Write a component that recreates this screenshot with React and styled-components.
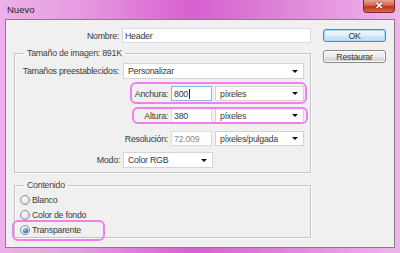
import styled, { createGlobalStyle } from "styled-components";

const Global = createGlobalStyle`
  html, body { margin: 0; padding: 0; background: #e9a2e3; }
  body { font-family: "Liberation Sans", Arial, sans-serif; }
`;

const Window = styled.div`
  width: 400px;
  height: 253px;
  box-sizing: border-box;
  padding: 0 5px 5px 5px;
  display: flex;
  flex-direction: column;
  background: linear-gradient(90deg, #eeb0ea 0%, #e89ee2 18%, #d760cf 48%, #df86d8 72%, #efb6eb 100%);
`;

const TitleBar = styled.div`
  height: 19px;
  display: flex;
  align-items: flex-start;
  flex-shrink: 0;
`;

const Title = styled.span`
  font-size: 9.5px;
  color: #1e1e1e;
  line-height: 20px;
  padding-left: 2px;
`;

const CloseButton = styled.div`
  margin-left: auto;
  width: 32px;
  height: 13px;
  box-sizing: border-box;
  border: 1px solid #7a2a2a;
  border-top: none;
  border-radius: 0 0 4px 4px;
  background: linear-gradient(180deg, #e8a496 0%, #d4664f 45%, #c0331c 55%, #d86a4e 100%);
  display: flex;
  align-items: center;
  justify-content: center;
  color: #fff;
  font-size: 10px;
  font-weight: bold;
  line-height: 1;
  text-shadow: 0 0 2px #5a1010;
`;

const Client = styled.div`
  flex: 1;
  display: flex;
  background: #f0f0f0;
  border: 1px solid #8c7a8a;
  padding: 0 0 0 8px;
  font-size: 8.8px;
  letter-spacing: -0.25px;
`;

const LeftColumn = styled.div`
  width: 297px;
  display: flex;
  flex-direction: column;
`;

const RightColumn = styled.div`
  margin-left: 12px;
  padding-top: 9px;
  display: flex;
  flex-direction: column;
  gap: 8px;
`;

const Button = styled.div`
  width: 63px;
  height: 13px;
  box-sizing: border-box;
  border: 1px solid ${(p) => (p.$primary ? "#3d8fc4" : "#8a8a8a")};
  border-radius: 3px;
  background: ${(p) =>
    p.$primary
      ? "linear-gradient(180deg, #f0f8fd 0%, #e1f0fa 50%, #cde6f6 51%, #c4e1f4 100%)"
      : "linear-gradient(180deg, #f4f4f4 0%, #ececec 50%, #dedede 51%, #d6d6d6 100%)"};
  box-shadow: ${(p) => (p.$primary ? "inset 0 0 0 1px #a8dcf4" : "inset 0 0 0 1px #fbfbfb")};
  color: #3a3a3a;
  display: flex;
  align-items: center;
  justify-content: center;
`;

const Row = styled.div`
  position: relative;
  display: flex;
  align-items: center;
  height: ${(p) => p.$h || 15}px;
  margin-top: ${(p) => p.$mt || 0}px;
`;

const Label = styled.span`
  width: ${(p) => p.$w}px;
  margin-right: ${(p) => p.$gap || 3}px;
  text-align: right;
  color: #3a3a3a;
  white-space: nowrap;
  flex-shrink: 0;
`;

const Input = styled.div`
  width: ${(p) => p.$w}px;
  height: 100%;
  box-sizing: border-box;
  background: #fff;
  border: 1px solid ${(p) => (p.$focus ? "#8cb6e2" : "#dcdcdc")};
  padding-left: 2px;
  display: flex;
  align-items: center;
  color: ${(p) => (p.$muted ? "#8a8a8a" : "#3a3a3a")};
  flex-shrink: 0;
`;

const Caret = styled.span`
  display: inline-block;
  width: 1px;
  height: 10px;
  background: #222;
  margin-left: 1px;
`;

const Select = styled.div`
  width: ${(p) => p.$w}px;
  height: 100%;
  box-sizing: border-box;
  background: #fff;
  border: 1px solid #d4d4d4;
  padding: 0 5px 0 4px;
  margin-left: ${(p) => p.$ml || 0}px;
  display: flex;
  align-items: center;
  justify-content: space-between;
  color: #3a3a3a;
  flex-shrink: 0;
`;

const Arrow = styled.span`
  width: 0;
  height: 0;
  border-left: 3px solid transparent;
  border-right: 3px solid transparent;
  border-top: 3px solid #111;
`;

const Group = styled.fieldset`
  margin: ${(p) => p.$mt}px 0 0 0;
  padding: ${(p) => p.$pt}px 0 ${(p) => p.$pb}px 0;
  min-width: 0;
  border: 1px solid #c6c6c6;
  box-shadow: inset 1px 1px 0 #fbfbfb, 1px 1px 0 #fbfbfb;
  border-radius: 0;
`;

const Legend = styled.legend`
  margin-left: 9px;
  padding: 0 3px;
  line-height: 12px;
  color: #404040;
`;

const RadioRow = styled.div`
  position: relative;
  display: flex;
  align-items: center;
  height: 14px;
  margin-top: ${(p) => p.$mt || 0}px;
  padding-left: 5px;
  color: #3a3a3a;
`;

const RadioCircle = styled.span`
  width: 10px;
  height: 10px;
  box-sizing: border-box;
  border-radius: 50%;
  border: 1px solid #8e8f8f;
  background: radial-gradient(circle at 40% 35%, #fdfdfd 0%, #e2e2e2 60%, #cfcfcf 100%);
  margin-right: 2px;
  display: flex;
  align-items: center;
  justify-content: center;
  &::after {
    content: "";
    display: ${(p) => (p.$checked ? "block" : "none")};
    width: 5px;
    height: 5px;
    border-radius: 50%;
    background: radial-gradient(circle at 40% 35%, #9fe0ff 0%, #2a7fc4 55%, #0d3f70 100%);
  }
`;

const Highlight = styled.span`
  position: absolute;
  left: ${(p) => p.$l}px;
  top: ${(p) => p.$t}px;
  width: ${(p) => p.$w}px;
  height: ${(p) => p.$h}px;
  box-sizing: border-box;
  border: 2px solid #f27ef0;
  border-radius: 6px;
  pointer-events: none;
`;

export default function App() {
  return (
    <>
      <Global />
      <Window>
        <TitleBar>
          <Title>Nuevo</Title>
          <CloseButton>✕</CloseButton>
        </TitleBar>
        <Client>
          <LeftColumn>
            <Row $mt={8}>
              <Label $w={105}>Nombre:</Label>
              <Input $w={189}>Header</Input>
            </Row>

            <Group $mt={4} $pt={4} $pb={4}>
              <Legend>Tamaño de imagen: 891K</Legend>
              <Row $h={16}>
                <Label $w={104} $gap={4}>Tamaños preestablecidos:</Label>
                <Select $w={181}>
                  Personalizar
                  <Arrow />
                </Select>
              </Row>
              <Row $mt={7}>
                <Highlight $l={115} $t={-4} $w={177} $h={22} />
                <Label $w={153}>Anchura:</Label>
                <Input $w={41} $focus>
                  800
                  <Caret />
                </Input>
                <Select $w={89} $ml={3}>
                  píxeles
                  <Arrow />
                </Select>
              </Row>
              <Row $mt={7}>
                <Highlight $l={117} $t={-1} $w={176} $h={17} />
                <Label $w={153}>Altura:</Label>
                <Input $w={41}>380</Input>
                <Select $w={89} $ml={3}>
                  píxeles
                  <Arrow />
                </Select>
              </Row>
              <Row $mt={8}>
                <Label $w={153}>Resolución:</Label>
                <Input $w={41} $muted>
                  72.009
                </Input>
                <Select $w={89} $ml={3}>
                  píxeles/pulgada
                  <Arrow />
                </Select>
              </Row>
              <Row $mt={6} $h={16}>
                <Label $w={105}>Modo:</Label>
                <Select $w={90}>
                  Color RGB
                  <Arrow />
                </Select>
              </Row>
            </Group>

            <Group $mt={6} $pt={0} $pb={0}>
              <Legend>Contenido</Legend>
              <RadioRow $mt={2}>
                <RadioCircle />
                Blanco
              </RadioRow>
              <RadioRow $mt={1}>
                <RadioCircle />
                Color de fondo
              </RadioRow>
              <RadioRow $mt={1}>
                <Highlight $l={-3} $t={-3} $w={93} $h={21} />
                <RadioCircle $checked />
                Transparente
              </RadioRow>
            </Group>
          </LeftColumn>

          <RightColumn>
            <Button $primary>OK</Button>
            <Button>Restaurar</Button>
          </RightColumn>
        </Client>
      </Window>
    </>
  );
}
